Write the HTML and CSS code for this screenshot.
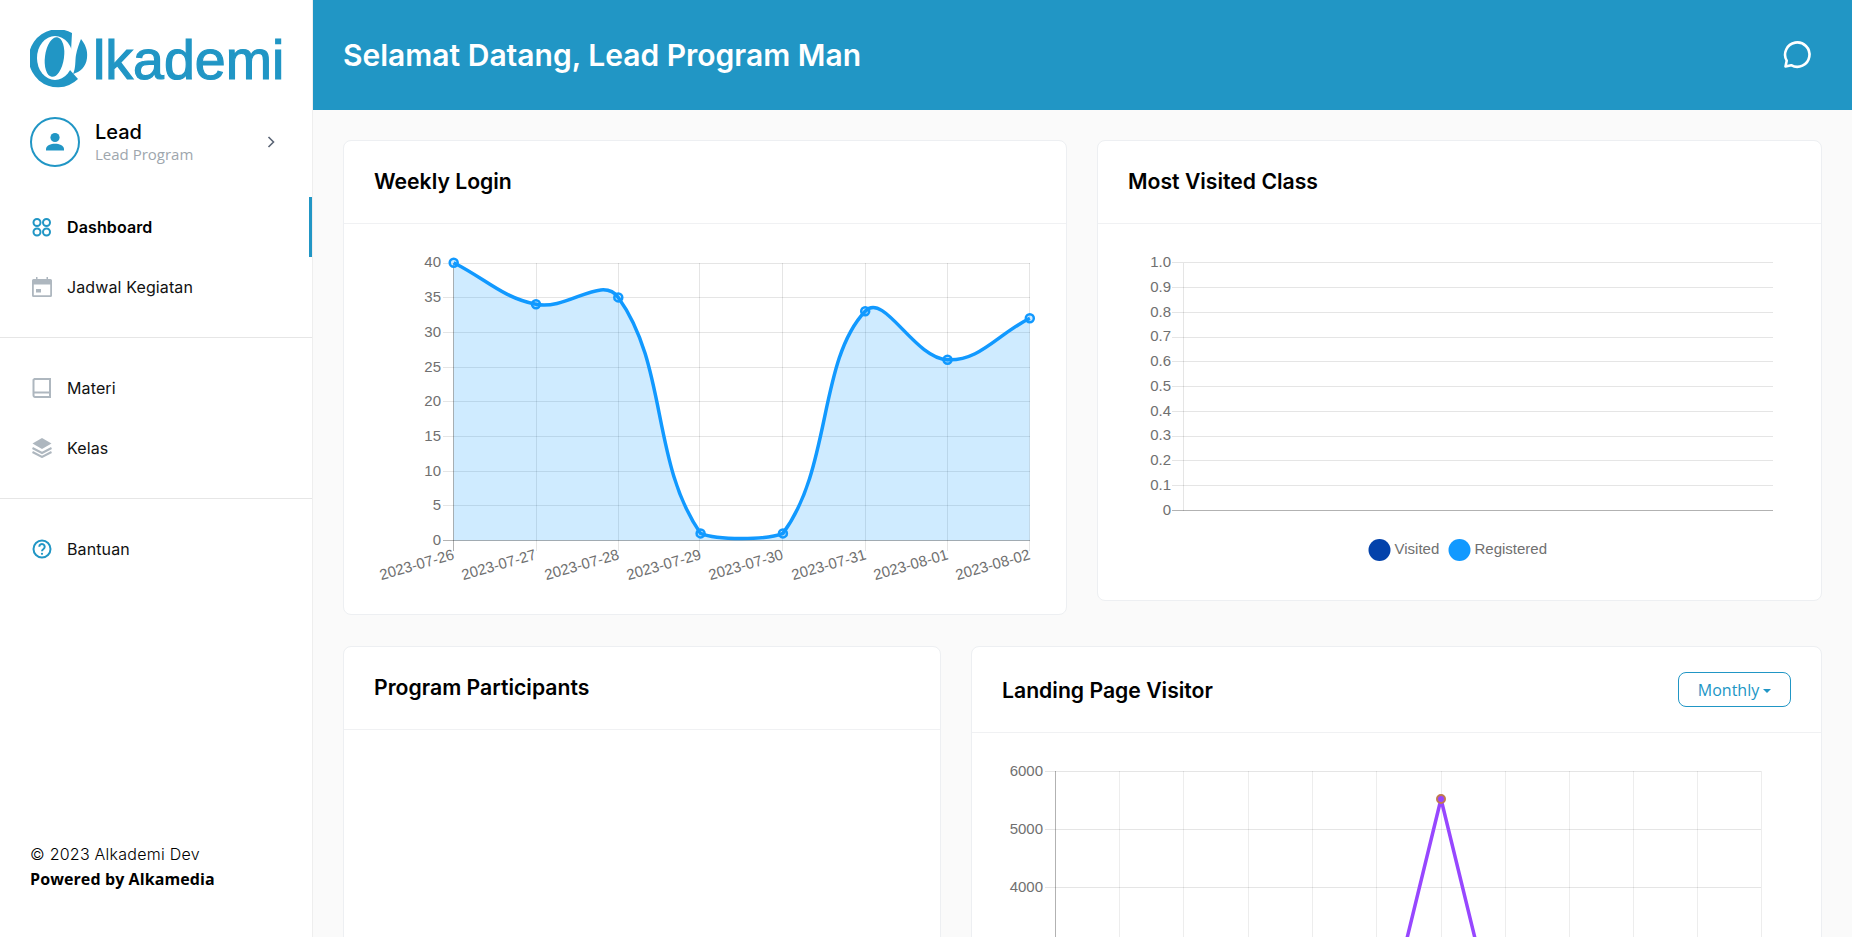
FILE: index.html
```html
<!DOCTYPE html>
<html lang="en">
<head>
    <meta charset="UTF-8">
    <meta name="viewport" content="width=device-width, initial-scale=1.0">
    <title>Alkademi Dashboard</title>
    <link rel="stylesheet" href="styles.css">
</head>
<body>
    <div class="app">
        <aside class="sidebar">
            <div class="logo">
                <svg class="logo-mark" viewBox="30 30 60 60" width="60" height="60">
                    <path class="blue" d="M72 33A29 29 0 1 0 78 79L70 70Z"/>
                    <ellipse class="white" cx="55" cy="58" rx="18" ry="22"/>
                    <ellipse class="blue" cx="54.500" cy="57" rx="9.500" ry="20" transform="rotate(8 54.500 57)"/>
                    <path class="blue" d="M81 39C85 44 88 50 87 58C86 67 80 72 73 74C76 68 75 60 76 55C77 49 79 44 81 39Z"/>
                </svg>
                <span class="logo-text">lkademi</span>
            </div>

            <div class="user">
                <div class="avatar">
                    <svg viewBox="0 0 24 24" width="24" height="24">
                        <circle class="blue" cx="12" cy="7.500" r="4.600"/>
                        <path class="blue" d="M3 20.500v-1.600C3 15.600 8 13.800 12 13.800s9 1.800 9 5.100v1.600Z"/>
                    </svg>
                </div>
                <div class="user-info">
                    <div class="user-name">Lead</div>
                    <div class="user-role">Lead Program</div>
                </div>
                <svg class="chevron" viewBox="0 0 10 14" width="10" height="14">
                    <path d="M2.500 2l5 5-5 5"/>
                </svg>
            </div>

            <nav class="nav-group first">
                <a class="nav-item active">
                    <svg class="icon" viewBox="0 0 20 20">
                        <g class="stroke-blue">
                            <circle cx="5" cy="5.500" r="3.500"/>
                            <circle cx="14.500" cy="5.500" r="3.500"/>
                            <circle cx="5" cy="15" r="3.500"/>
                            <circle cx="14.500" cy="15" r="3.500"/>
                        </g>
                    </svg>
                    Dashboard
                </a>
                <a class="nav-item">
                    <svg class="icon" viewBox="0 0 20 20">
                        <path class="gray" fill-rule="evenodd" d="M4 0h1.500v2h9V0H16v2h2.500A1.500 1.500 0 0 1 20 3.500v15a1.500 1.500 0 0 1-1.500 1.500h-17A1.500 1.500 0 0 1 0 18.500v-15A1.500 1.500 0 0 1 1.500 2H4ZM1.800 7.500v10.700h16.400V7.500Z"/>
                        <rect class="gray" x="4" y="12" width="5" height="3.500"/>
                    </svg>
                    Jadwal Kegiatan
                </a>
            </nav>

            <nav class="nav-group">
                <a class="nav-item">
                    <svg class="icon" viewBox="0 0 20 20">
                        <path class="stroke-gray" d="M2.500 1h15.500v18H3.500A1.800 1.800 0 0 1 1.500 17V2Z"/>
                        <path class="stroke-gray" d="M1.500 14.500H18"/>
                    </svg>
                    Materi
                </a>
                <a class="nav-item">
                    <svg class="icon" viewBox="0 0 20 20">
                        <path class="gray" d="M10 0l9.500 5.500L10 11 .5 5.500Z"/>
                        <path class="stroke-gray" d="M.5 10l9.500 5 9.500-5M.5 14l9.500 5 9.500-5"/>
                    </svg>
                    Kelas
                </a>
            </nav>

            <nav class="nav-group last">
                <a class="nav-item">
                    <svg class="icon" viewBox="0 0 20 20">
                        <circle class="stroke-blue" cx="10" cy="10" r="8.500"/>
                        <path class="stroke-blue" d="M7.300 7.800a2.700 2.700 0 1 1 4.200 2.200c-1 .7-1.500 1.200-1.500 2.300"/>
                        <circle class="blue" cx="10" cy="14.800" r="1.100"/>
                    </svg>
                    Bantuan
                </a>
            </nav>

            <footer class="side-footer">
                <div class="copyright">© 2023 Alkademi Dev</div>
                <div class="powered">Powered by Alkamedia</div>
            </footer>
        </aside>

        <main class="main">
            <header class="topbar">
                <h1>Selamat Datang, Lead Program Man</h1>
                <svg class="chat" viewBox="0 0 32 32" width="32" height="32">
                    <path d="M4.500 27.500l1.200-5.800A12.200 12.200 0 1 1 10.200 26.200Z"/>
                </svg>
            </header>

            <div class="content">
                <div class="row even">
                    <section class="card">
                        <div class="card-head"><h2>Weekly Login</h2></div>
                        <!-- viewBox uses page coordinates so chart numbers can be read off the screenshot -->
                        <svg class="chart weekly" viewBox="344 224 722 390">
                            <g class="grid">
                                <path d="M443 263.500H1030M443 297.500H1030M443 332.500H1030M443 367.500H1030M443 401.500H1030M443 436.500H1030M443 471.500H1030M443 505.500H1030"/>
                                <path d="M536.500 263V551M618.500 263V551M699.500 263V551M782.500 263V551M865.500 263V551M947.500 263V551M1029.500 263V551"/>
                            </g>
                            <path class="area" d="M453.700 262.700C486.600 279.300 501.300 297 536 304.300C567.100 310.900 601.900 274.600 618.300 297.400C667.800 366.300 651.100 462.400 700.600 533.400C716.900 540.300 765.900 540.300 782.900 533.400C831.800 467.400 818.300 360.700 865.200 311.200C884.100 291.200 914 358.400 947.500 359.800C979.800 361.200 996.900 334.800 1029.800 318.200V540.500H453.700Z"/>
                            <path class="axis" d="M443 540.500H1030M453.500 263V551"/>
                            <path class="line" d="M453.700 262.700C486.600 279.300 501.300 297 536 304.300C567.100 310.900 601.900 274.600 618.300 297.400C667.800 366.300 651.100 462.400 700.600 533.400C716.900 540.300 765.900 540.300 782.900 533.400C831.800 467.400 818.300 360.700 865.200 311.200C884.100 291.200 914 358.400 947.500 359.800C979.800 361.200 996.900 334.800 1029.800 318.200"/>
                            <g class="dots">
                                <circle cx="453.700" cy="262.700" r="4"/>
                                <circle cx="536" cy="304.300" r="4"/>
                                <circle cx="618.300" cy="297.400" r="4"/>
                                <circle cx="700.600" cy="533.400" r="4"/>
                                <circle cx="782.900" cy="533.400" r="4"/>
                                <circle cx="865.200" cy="311.200" r="4"/>
                                <circle cx="947.500" cy="359.800" r="4"/>
                                <circle cx="1029.800" cy="318.200" r="4"/>
                            </g>
                            <g class="tick end">
                                <text x="441" y="267">40</text>
                                <text x="441" y="302">35</text>
                                <text x="441" y="337">30</text>
                                <text x="441" y="372">25</text>
                                <text x="441" y="406">20</text>
                                <text x="441" y="441">15</text>
                                <text x="441" y="476">10</text>
                                <text x="441" y="510">5</text>
                                <text x="441" y="545">0</text>
                            </g>
                            <g class="tick end">
                                <text transform="translate(455 559) rotate(-16)">2023-07-26</text>
                                <text transform="translate(537 559) rotate(-16)">2023-07-27</text>
                                <text transform="translate(620 559) rotate(-16)">2023-07-28</text>
                                <text transform="translate(702 559) rotate(-16)">2023-07-29</text>
                                <text transform="translate(784 559) rotate(-16)">2023-07-30</text>
                                <text transform="translate(867 559) rotate(-16)">2023-07-31</text>
                                <text transform="translate(949 559) rotate(-16)">2023-08-01</text>
                                <text transform="translate(1031 559) rotate(-16)">2023-08-02</text>
                            </g>
                        </svg>
                    </section>

                    <section class="card">
                        <div class="card-head"><h2>Most Visited Class</h2></div>
                        <svg class="chart visited" viewBox="1098 224 723 376">
                            <g class="grid">
                                <path d="M1172 262.500H1773M1172 287.500H1773M1172 312.500H1773M1172 337.500H1773M1172 361.500H1773M1172 386.500H1773M1172 411.500H1773M1172 436.500H1773M1172 460.500H1773M1172 485.500H1773"/>
                                <path d="M1183.500 263V511"/>
                            </g>
                            <path class="axis" d="M1172 510.500H1773"/>
                            <g class="tick end">
                                <text x="1171" y="267">1.0</text>
                                <text x="1171" y="292">0.9</text>
                                <text x="1171" y="317">0.8</text>
                                <text x="1171" y="341">0.7</text>
                                <text x="1171" y="366">0.6</text>
                                <text x="1171" y="391">0.5</text>
                                <text x="1171" y="416">0.4</text>
                                <text x="1171" y="440">0.3</text>
                                <text x="1171" y="465">0.2</text>
                                <text x="1171" y="490">0.1</text>
                                <text x="1171" y="515">0</text>
                            </g>
                            <circle class="legend-dark" cx="1379.500" cy="550" r="11"/>
                            <text class="legend" x="1394.500" y="554">Visited</text>
                            <circle class="legend-light" cx="1459.500" cy="550" r="11"/>
                            <text class="legend" x="1474.500" y="554">Registered</text>
                        </svg>
                    </section>
                </div>

                <div class="row uneven">
                    <section class="card">
                        <div class="card-head"><h2>Program Participants</h2></div>
                        <div class="empty-body"></div>
                    </section>

                    <section class="card">
                        <div class="card-head spaced">
                            <h2>Landing Page Visitor</h2>
                            <button class="period">Monthly<span class="caret"></span></button>
                        </div>
                        <svg class="chart landing" viewBox="972 733 849 400">
                            <g class="grid">
                                <path d="M1045 771.500H1761M1045 829.500H1761M1045 887.500H1761"/>
                                <path class="soft" d="M1119.500 771V1000M1183.500 771V1000M1248.500 771V1000M1312.500 771V1000M1376.500 771V1000M1441.500 771V1000M1505.500 771V1000M1569.500 771V1000M1633.500 771V1000M1697.500 771V1000M1761.500 771V1000"/>
                            </g>
                            <path class="axis" d="M1055.500 771V1000"/>
                            <path class="line purple" d="M1400 967L1441 799L1482 967"/>
                            <circle class="peak" cx="1441" cy="799" r="4"/>
                            <g class="tick end">
                                <text x="1043" y="776">6000</text>
                                <text x="1043" y="834">5000</text>
                                <text x="1043" y="892">4000</text>
                            </g>
                        </svg>
                    </section>
                </div>
            </div>
        </main>
    </div>
</body>
</html>
```

FILE: styles.css
```css
body {
    margin: 0;
    font-family: 'Inter', sans-serif;
    background-color: #fafafa;
    color: #000;
}
.app {
    display: flex;
    height: 100vh;
    overflow: hidden;
}

/* Shared svg paint */
.blue { fill: #2196c5; }
.white { fill: #fff; }
.gray { fill: #aeb7bf; }
.stroke-blue { fill: none; stroke: #2196c5; stroke-width: 2; }
.stroke-gray { fill: none; stroke: #aeb7bf; stroke-width: 2; }

/* Sidebar */
.sidebar {
    width: 312px;
    flex-shrink: 0;
    display: flex;
    flex-direction: column;
    background-color: #fff;
    border-right: 1px solid #eee;
}
.logo {
    display: flex;
    align-items: flex-start;
    padding: 30px 0 0 30px;
    height: 87px;
}
.logo-mark {
    display: block;
    flex-shrink: 0;
}
.logo-text {
    margin-left: 3px;
    font-family: 'Liberation Sans', sans-serif;
    font-size: 55.5px;
    line-height: 60px;
    color: #2196c5;
    -webkit-text-stroke: 1.2px #2196c5;
}
.user {
    display: flex;
    align-items: center;
    padding: 0 36px 0 30px;
    height: 50px;
}
.avatar {
    width: 46px;
    height: 46px;
    border: 2px solid #2196c5;
    border-radius: 50%;
    display: flex;
    align-items: center;
    justify-content: center;
    flex-shrink: 0;
}
.user-info {
    margin-left: 15px;
    padding-bottom: 2px;
    flex: 1;
}
.user-name {
    font-size: 20px;
    font-weight: 500;
    line-height: 26px;
}
.user-role {
    font-family: 'Open Sans', sans-serif;
    font-size: 15px;
    line-height: 19px;
    color: #9ea6ad;
}
.chevron path {
    fill: none;
    stroke: #5a6475;
    stroke-width: 1.600;
}
.nav-group {
    padding: 20px 0;
    border-bottom: 1px solid #e6e6e6;
}
.nav-group.first {
    padding-top: 30px;
}
.nav-group.last {
    border-bottom: none;
}
.nav-item {
    display: flex;
    align-items: center;
    height: 60px;
    padding-left: 32px;
    font-size: 16px;
    letter-spacing: 0.12px;
    color: #111;
}
.nav-item.active {
    font-weight: 600;
    color: #000;
    box-shadow: inset -3px 0 0 #2196c5;
}
.icon {
    width: 20px;
    height: 20px;
    margin-right: 15px;
    flex-shrink: 0;
}
.side-footer {
    margin-top: auto;
    padding: 0 0 45px 30px;
}
.copyright {
    font-size: 16px;
    font-weight: 300;
    letter-spacing: 0.25px;
    line-height: 25px;
}
.powered {
    font-family: 'Open Sans', sans-serif;
    font-size: 16px;
    font-weight: 700;
    letter-spacing: 0.1px;
    line-height: 25px;
}

/* Main area */
.main {
    flex: 1;
    min-width: 0;
}
.topbar {
    height: 110px;
    display: flex;
    align-items: center;
    justify-content: space-between;
    padding: 0 39px 0 30px;
    background-color: #2196c5;
    color: #fff;
}
.topbar h1 {
    margin: 0;
    font-size: 30px;
    font-weight: 600;
}
.chat path {
    fill: none;
    stroke: #fff;
    stroke-width: 2.600;
    stroke-linejoin: round;
}
.content {
    padding: 30px 30px 0;
}
.row {
    display: grid;
    align-items: start;
    column-gap: 30px;
    margin-bottom: 31px;
}
.row.even {
    grid-template-columns: 724px 1fr;
}
.row.uneven {
    grid-template-columns: 598px 1fr;
}
.card {
    background-color: #fff;
    border: 1px solid #edeff2;
    border-radius: 8px;
}
.card-head {
    box-sizing: border-box;
    height: 83px;
    display: flex;
    align-items: center;
    padding: 0 30px 2px;
    border-bottom: 1px solid #f0f1f3;
}
.card-head.spaced {
    height: 86px;
    padding-bottom: 0;
    justify-content: space-between;
}
.card-head h2 {
    margin: 0;
    font-size: 21.200px;
    font-weight: 600;
}
.period {
    width: 113px;
    height: 35px;
    background-color: #fff;
    border: 1px solid #2196c5;
    border-radius: 8px;
    color: #2196c5;
    font-family: 'Open Sans', sans-serif;
    font-size: 16px;
}
.caret {
    display: inline-block;
    margin-left: 4px;
    vertical-align: middle;
    border-top: 4px solid #2196c5;
    border-left: 4px solid transparent;
    border-right: 4px solid transparent;
}
.empty-body {
    height: 400px;
}

/* Charts */
.chart {
    display: block;
    width: 100%;
}
.chart.weekly { height: 390px; }
.chart.visited { height: 376px; }
.chart.landing { height: 400px; }
.grid path {
    fill: none;
    stroke: rgba(0, 0, 0, 0.1);
}
.grid .soft {
    stroke: rgba(0, 0, 0, 0.07);
}
.axis {
    fill: none;
    stroke: rgba(0, 0, 0, 0.3);
}
.area {
    fill: rgba(17, 153, 255, 0.2);
}
.line {
    fill: none;
    stroke: #1199ff;
    stroke-width: 3.500;
}
.line.purple {
    stroke: #9747ff;
}
.dots circle {
    fill: rgba(17, 153, 255, 0.2);
    stroke: #1199ff;
    stroke-width: 2.500;
}
.peak {
    fill: #9747ff;
    stroke: #c07a50;
    stroke-width: 2;
}
.tick text,
.legend {
    font-family: 'Liberation Sans', sans-serif;
    font-size: 15px;
    fill: #707070;
}
.tick.end text {
    text-anchor: end;
}
.legend-dark {
    fill: #0342ab;
}
.legend-light {
    fill: #1199ff;
}
```
